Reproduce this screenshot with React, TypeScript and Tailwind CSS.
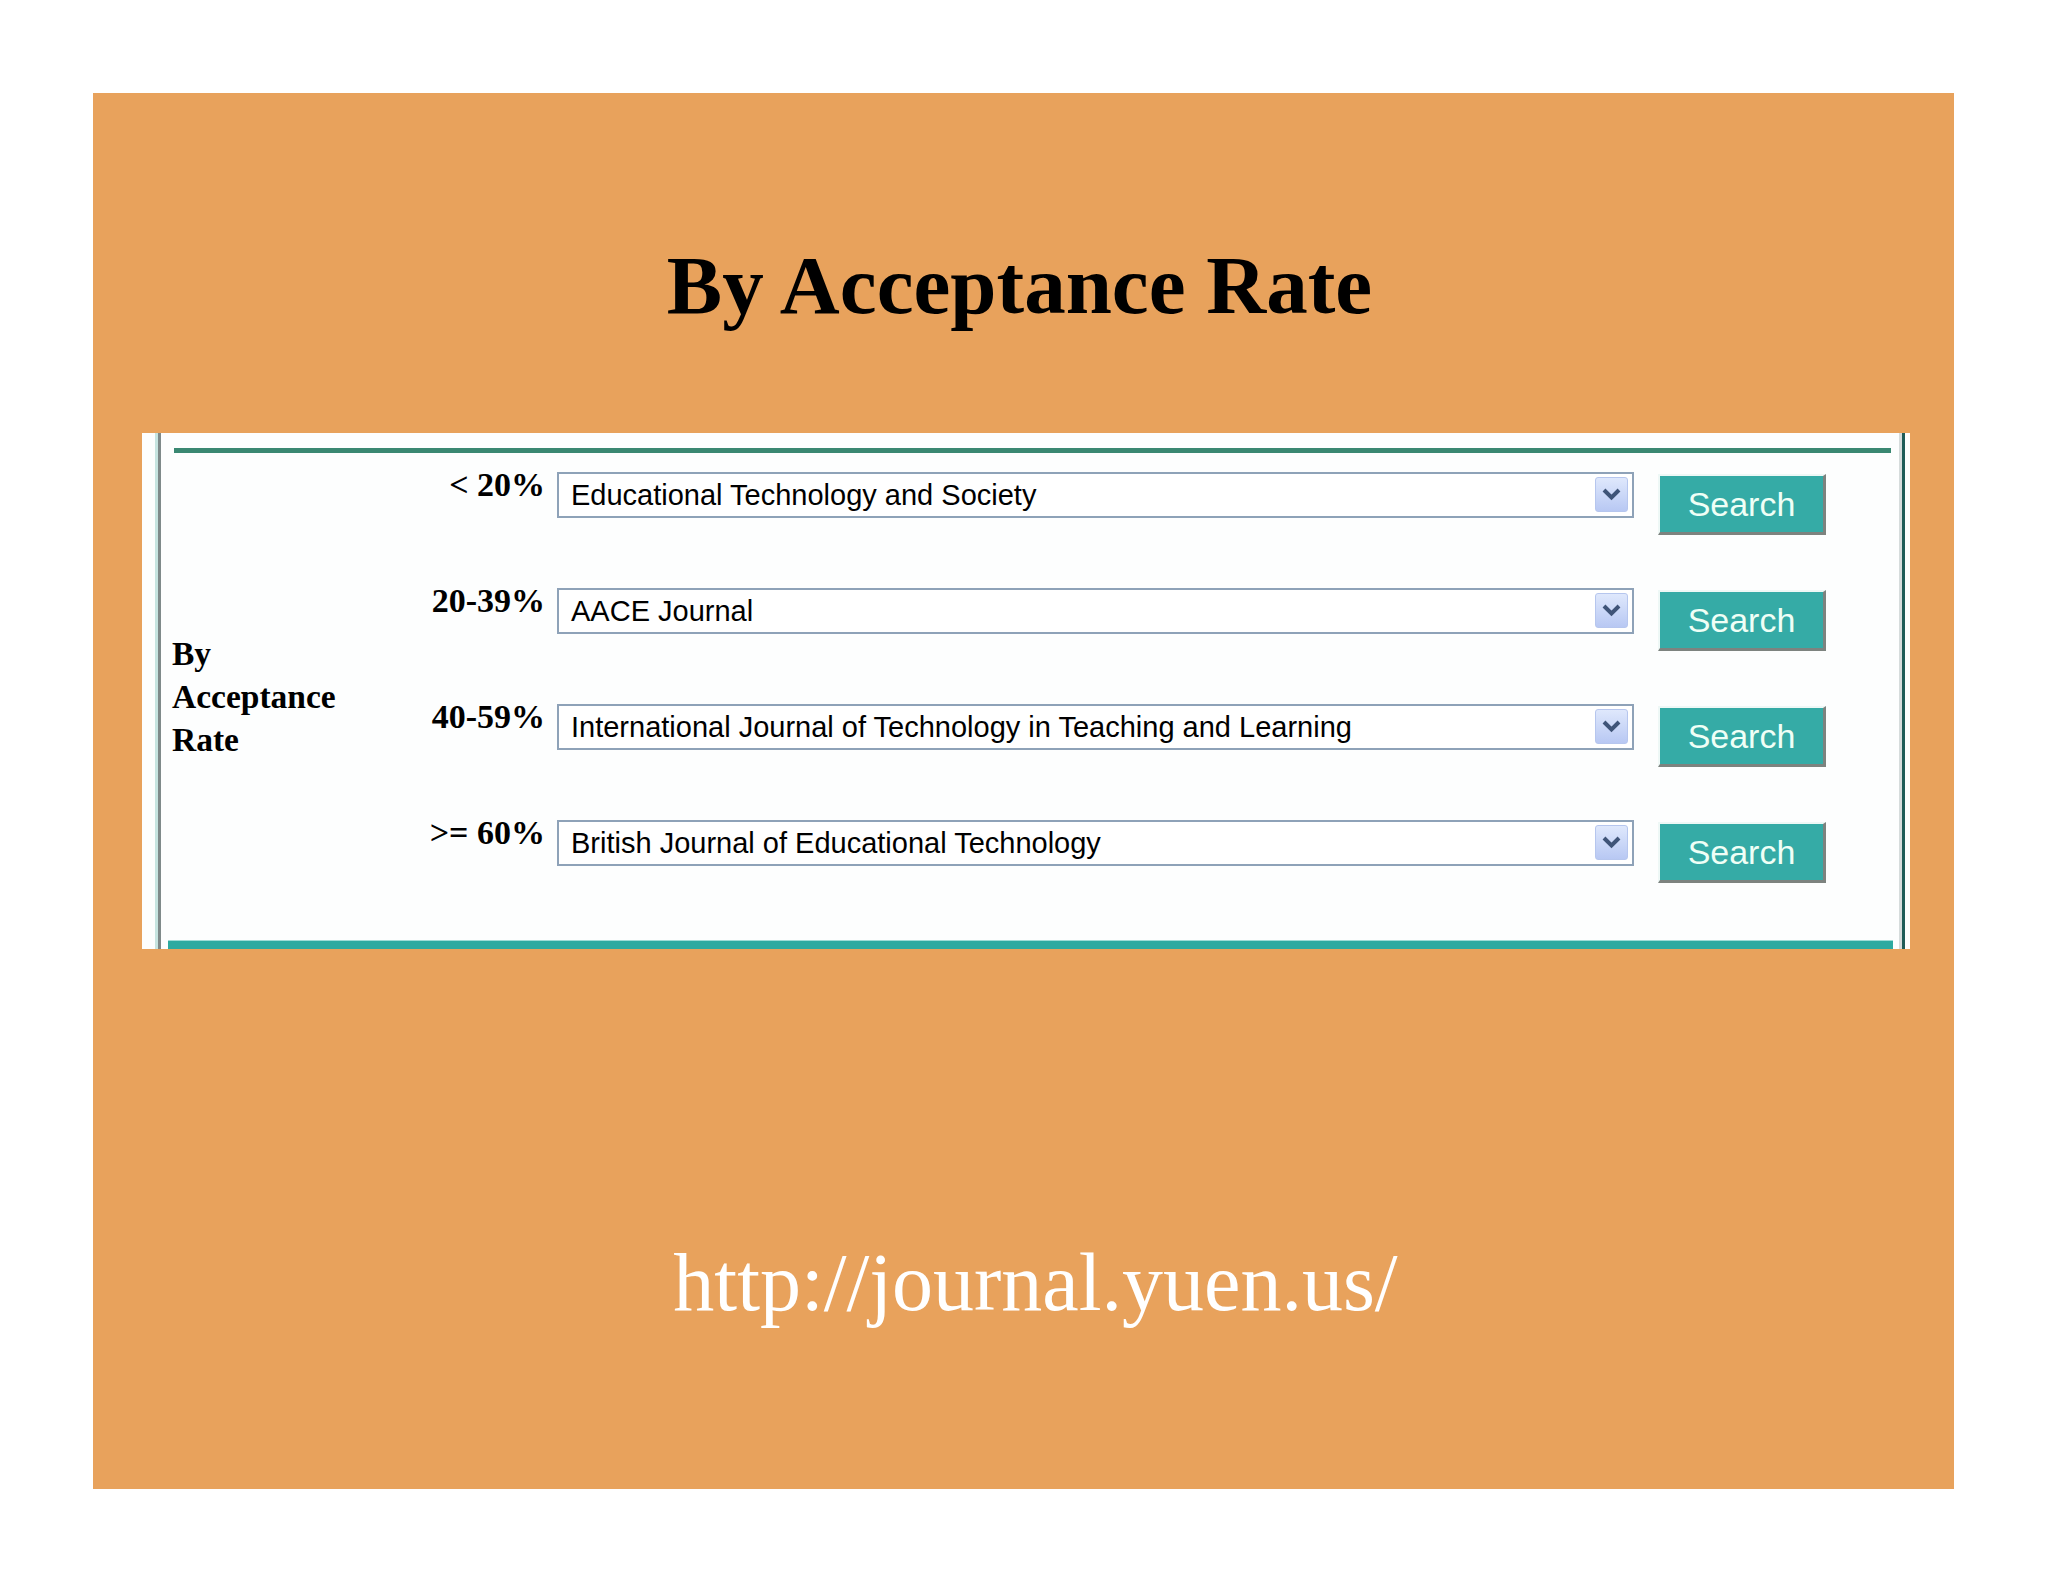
import React from 'react';

const rows = [
  { label: '< 20%', journal: 'Educational Technology and Society' },
  { label: '20-39%', journal: 'AACE Journal' },
  { label: '40-59%', journal: 'International Journal of Technology in Teaching and Learning' },
  { label: '>= 60%', journal: 'British Journal of Educational Technology' },
];

function Chevron() {
  return (
    <svg width="19" height="13" viewBox="0 0 19 13">
      <polyline points="2,2 9.5,9.5 17,2" fill="none" stroke="#3f5478" strokeWidth="4" strokeLinejoin="miter" />
    </svg>
  );
}

function JournalSelect({ value }: { value: string }) {
  return (
    <div className="relative w-[1077px] h-[46px] border-2 border-[#8ea2b8] bg-white flex items-center pl-[12px]">
      <span className="text-[29px] leading-none text-black whitespace-nowrap" style={{ fontFamily: '"Liberation Sans", Arial, sans-serif' }}>
        {value}
      </span>
      <div className="absolute right-[4px] top-[3px] w-[33px] h-[35px] rounded-[3px] border border-[#b6c6ee] bg-gradient-to-b from-[#dfe8fc] to-[#b8c8f3] flex items-center justify-center">
        <Chevron />
      </div>
    </div>
  );
}

function SearchButton() {
  return (
    <button className="mt-[2px] w-[168px] h-[61px] bg-[#35aba6] border-t-2 border-l-2 border-t-[#eef8f6] border-l-[#eef8f6] border-r-[3px] border-b-[3px] border-r-[#7d837f] border-b-[#7d837f] flex items-center justify-center">
      <span className="text-[34px] leading-none text-[#effff6]" style={{ fontFamily: '"Liberation Sans", Arial, sans-serif' }}>
        Search
      </span>
    </button>
  );
}

export default function App() {
  return (
    <div className="w-[2048px] h-[1582px] bg-white pt-[93px] pl-[93px]">
      <div className="w-[1861px] h-[1396px] bg-[#e8a25c] flex flex-col" style={{ fontFamily: '"Liberation Serif", "Times New Roman", serif' }}>
        {/* Title */}
        <div className="mt-[151px] text-center text-[83px] leading-none font-bold text-black pr-[8px]">
          By Acceptance Rate
        </div>

        {/* Screenshot panel */}
        <div className="mt-[106px] ml-[49px] w-[1768px] h-[516px] bg-[#fdfefe] flex">
          <div className="w-[13px]" />
          <div className="w-[3px] bg-[#c6e4e0]" />
          <div className="w-[3px] bg-[#7f8a8a]" />

          <div className="flex-1 flex flex-col">
            <div className="mt-[15px] ml-[13px] mr-[8px] h-[5px] bg-[#3a8872]" />

            <div className="flex-1 flex">
              {/* Left caption */}
              <div className="w-[175px] pl-[11px] flex items-center">
                <div className="text-[33.5px] leading-[43px] font-bold text-black">
                  By<br />Acceptance<br />Rate
                </div>
              </div>

              {/* Rows */}
              <div className="pt-[19px] flex flex-col gap-[53px]">
                {rows.map((r) => (
                  <div key={r.label} className="h-[63px] flex items-start">
                    <div className="w-[209px] text-right text-[34px] leading-[26px] font-bold text-black whitespace-nowrap">
                      {r.label}
                    </div>
                    <div className="ml-[12px]">
                      <JournalSelect value={r.journal} />
                    </div>
                    <div className="ml-[24px]">
                      <SearchButton />
                    </div>
                  </div>
                ))}
              </div>
            </div>

            <div className="ml-[7px] mr-[6px] h-[9px] bg-[#2eaaa0] border-t border-[#9fdcd6]" />
          </div>

          <div className="w-[3px] bg-[#d6dcdc]" />
          <div className="w-[3px] bg-[#1f5c58]" />
          <div className="w-[5px]" />
        </div>

        {/* URL */}
        <div className="mt-[293px] text-center text-[82px] leading-none text-white pl-[24px]">
          http://journal.yuen.us/
        </div>
      </div>
    </div>
  );
}
